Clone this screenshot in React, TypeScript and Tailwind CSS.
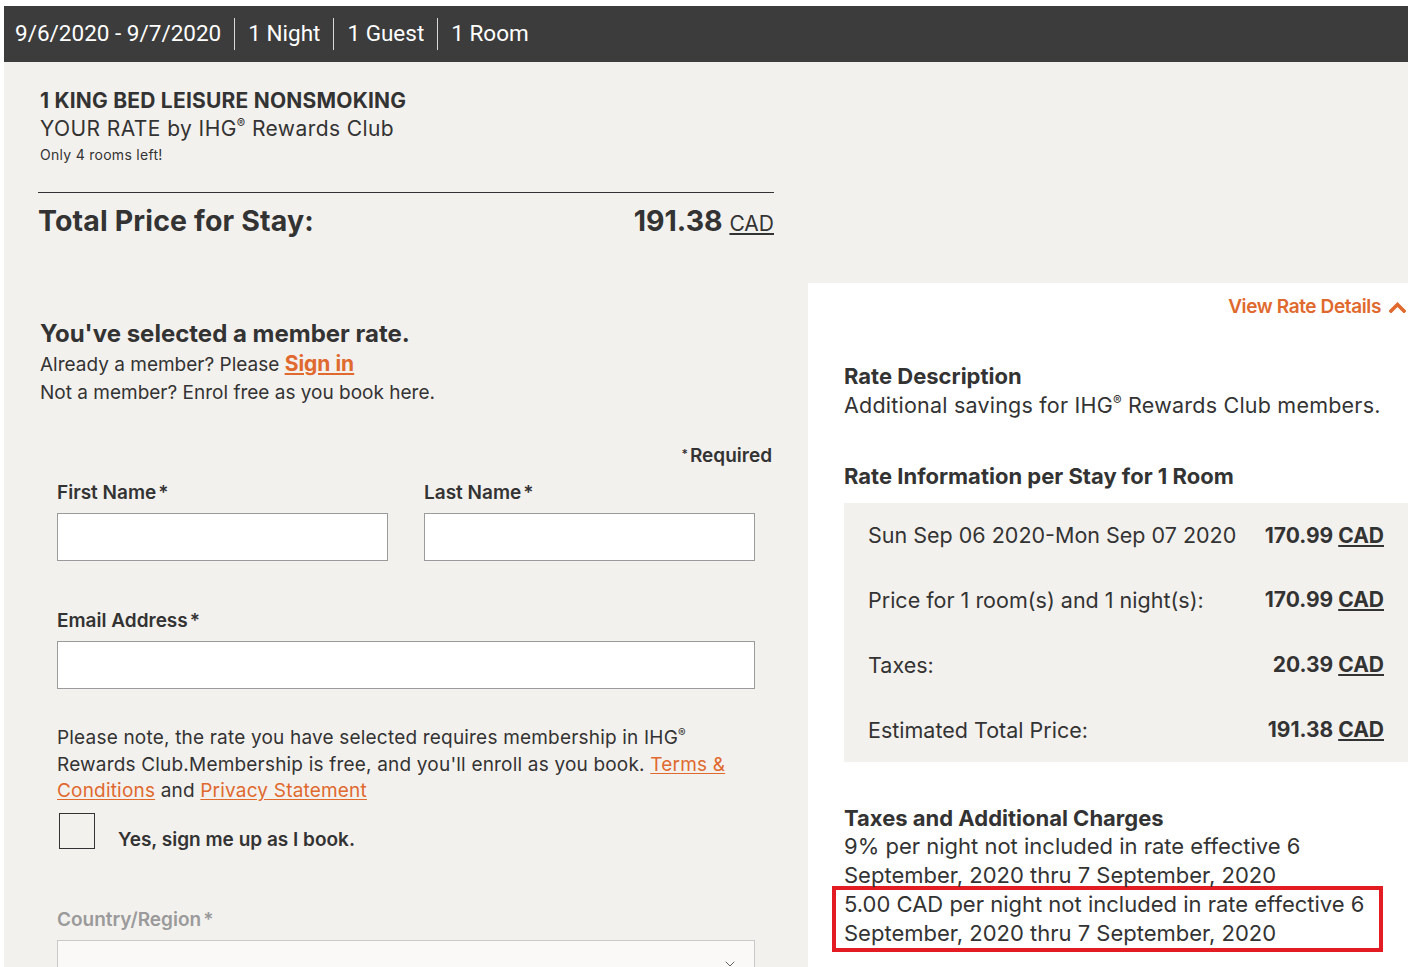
import React from 'react';
import { ChevronDown } from 'lucide-react';

const font = { fontFamily: 'Inter, Roboto, "Liberation Sans", sans-serif' };

const Divider = () => <span className="mx-[13px] h-8 w-px bg-[#d9d9d9]" />;

const Reg = () => <span className="align-super text-[0.6em] leading-none">®</span>;

const Field: React.FC<{ label: string; className?: string }> = ({ label, className }) => (
  <div className={className}>
    <div className="text-[19px] leading-7 font-semibold text-[#333]">
      {label}
      <span className="ml-0.5">*</span>
    </div>
    <div className="mt-[6px] h-12 border border-[#9b9b9b] bg-white" />
  </div>
);

const Price: React.FC<{ amount: string }> = ({ amount }) => (
  <span className="font-bold text-[21px]">
    {amount} <span className="underline underline-offset-2">CAD</span>
  </span>
);

const rows = [
  { label: 'Sun Sep 06 2020-Mon Sep 07 2020', amount: '170.99' },
  { label: 'Price for 1 room(s) and 1 night(s):', amount: '170.99' },
  { label: 'Taxes:', amount: '20.39' },
  { label: 'Estimated Total Price:', amount: '191.38' },
];

export default function App() {
  return (
    <div className="h-screen overflow-hidden bg-white pl-1 pt-1.5 text-[#333]" style={font}>
      <div className="flex h-full w-[1404px] flex-col bg-[#f3f1ee]">
        {/* Header */}
        <div
          className="flex h-14 shrink-0 items-center bg-[#3c3c3c] pl-[11px] text-[22.5px] text-white"
          style={{ fontFamily: 'Roboto, "Liberation Sans", sans-serif' }}
        >
          <span>9/6/2020 - 9/7/2020</span>
          <Divider />
          <span>1 Night</span>
          <Divider />
          <span>1 Guest</span>
          <Divider />
          <span>1 Room</span>
        </div>

        <div className="flex flex-1">
          {/* Left column */}
          <div className="w-[804px] shrink-0 pl-9 pr-[34px] pt-[27px]">
            <div className="text-[21px] leading-6 font-bold tracking-[0.01em]">1 KING BED LEISURE NONSMOKING</div>
            <div className="mt-0.5 text-[21px] leading-7 tracking-[0.02em]">
              YOUR RATE by IHG<Reg /> Rewards Club
            </div>
            <div className="mt-0.5 text-[14px] leading-5 tracking-[0.02em]">Only 4 rooms left!</div>

            <div className="-ml-0.5 mt-[27px] border-t border-[#333]" />

            <div className="mt-[10px] flex items-baseline justify-between leading-9">
              <span className="-ml-0.5 text-[28.5px] font-bold tracking-[0.005em]">Total Price for Stay:</span>
              <span className="text-[28.5px] font-bold">
                191.38 <span className="text-[21px] font-normal underline underline-offset-2">CAD</span>
              </span>
            </div>

            <div className="mt-[76px] text-[24px] leading-8 font-bold">You've selected a member rate.</div>
            <div className="text-[19px] leading-7">
              Already a member? Please{' '}
              <a className="text-[21px] font-bold text-[#e0692e] underline underline-offset-2">Sign in</a>
            </div>
            <div className="text-[19px] leading-7">Not a member? Enrol free as you book here.</div>

            <div className="mt-[35px] pr-0.5 text-right text-[19px] leading-7 font-semibold">
              <span className="relative -top-1 mr-0.5 text-[12px]">*</span>Required
            </div>

            <div className="pl-[17px] pr-[19px]">
              <div className="mt-[7px] grid grid-cols-2 gap-9">
                <Field label="First Name" />
                <Field label="Last Name" />
              </div>

              <Field label="Email Address" className="mt-[46px]" />

              <p className="mt-[36px] pr-[20px] text-[19px] leading-[26.5px] tracking-[0.01em]">
                Please note, the rate you have selected requires membership in IHG
                <Reg /> Rewards Club.Membership is free, and you'll enroll as you book.{' '}
                <a className="text-[#e0692e] underline underline-offset-2">Terms&nbsp;&amp; Conditions</a> and{' '}
                <a className="text-[#e0692e] underline underline-offset-2">Privacy Statement</a>
              </p>

              <div className="mt-[8px] flex items-start">
                <div className="ml-0.5 h-9 w-9 border border-[#333] bg-[#f3f1ee]" />
                <span className="ml-[23px] mt-[13px] text-[19px] leading-7 font-semibold">
                  Yes, sign me up as I book.
                </span>
              </div>

              <div className="mt-[52px] text-[19px] leading-7 font-semibold text-[#9a9a9a]">
                Country/Region<span className="ml-0.5">*</span>
              </div>
              <div className="mt-[6px] flex h-12 items-start justify-end border border-[#c8c8c8] bg-[#faf9f7] pr-[16px] pt-[15px]">
                <ChevronDown className="h-4 w-4 text-[#666]" strokeWidth={1.5} />
              </div>
            </div>
          </div>

          {/* Right column */}
          <div className="flex flex-1 flex-col pt-[221px]">
            <div className="flex-1 bg-white pl-9 pt-[10px]">
              <div className="flex items-center justify-end pr-0.5 text-[19px] leading-7 font-semibold tracking-[-0.02em] text-[#e0692e]">
                View Rate Details
                <svg className="ml-2 h-[12px] w-[17px]" viewBox="0 0 17 12" fill="none">
                  <polyline points="2,10 8.5,3.5 15,10" stroke="currentColor" strokeWidth="3.6" strokeLinecap="square" />
                </svg>
              </div>

              <div className="pr-6">
                <div className="mt-[41px] text-[22px] leading-7 font-bold">Rate Description</div>
                <div className="mt-px text-[21.5px] leading-7 tracking-[0.01em]">
                  Additional savings for IHG<Reg /> Rewards Club members.
                </div>
                <div className="mt-[43px] text-[22px] leading-7 font-bold">Rate Information per Stay for 1 Room</div>
              </div>

              <div className="mt-[13px] bg-[#f3f1ee] px-6">
                {rows.map((r) => (
                  <div key={r.label} className="flex h-[64.75px] items-center justify-between text-[21.5px]">
                    <span>{r.label}</span>
                    <Price amount={r.amount} />
                  </div>
                ))}
              </div>

              <div className="pr-6">
                <div className="mt-[42px] text-[22px] leading-7 font-bold">Taxes and Additional Charges</div>
                <div className="text-[22px] leading-[29px]">
                  <p>9% per night not included in rate effective 6 September, 2020 thru 7 September, 2020</p>
                  <div className="-mb-1 -ml-3 -mt-1 w-[551px] border-4 border-[#e31b23] pl-2">
                    <p>5.00 CAD per night not included in rate effective 6 September, 2020 thru 7 September, 2020</p>
                  </div>
                </div>
              </div>
            </div>
          </div>
        </div>
      </div>
    </div>
  );
}
